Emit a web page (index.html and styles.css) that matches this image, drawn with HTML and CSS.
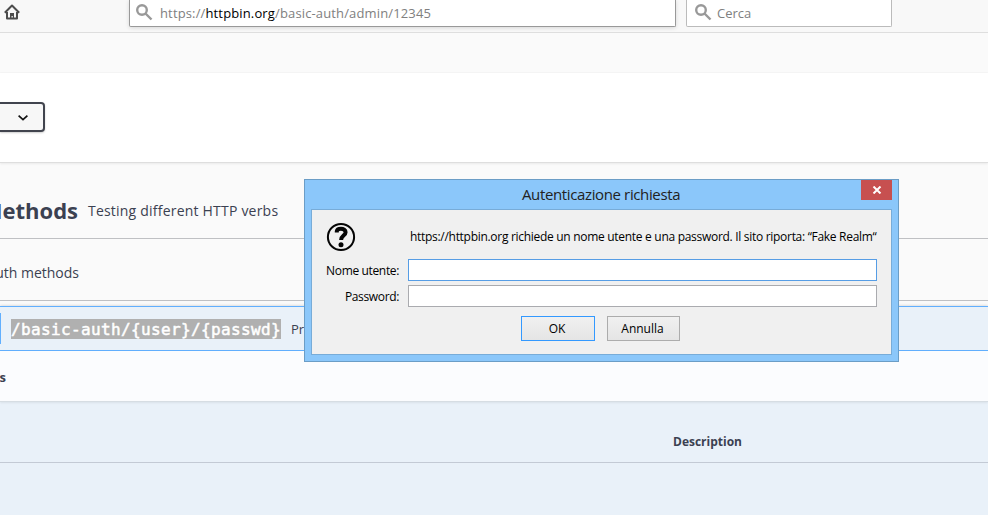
FILE: index.html
```html
<!DOCTYPE html>
<html lang="it">
<head>
<meta charset="utf-8">
<title>httpbin.org</title>
<link rel="stylesheet" href="styles.css">
</head>
<body>
<header class="toolbar">
  <svg class="home" width="16" height="16" viewBox="0 0 16 16" fill="none" stroke="#4c4c4c" stroke-width="2"><path d="M.8 8.700 8 1.500l7.200 7.200M3 8v6.500h10V8" stroke-linejoin="round"/><path d="M6 15V9h4v6H8.800v-3H7.500v3z" fill="#4c4c4c" stroke="none"/></svg>
  <div class="field address">
    <svg width="17" height="17" viewBox="0 0 17 17" fill="none" stroke="#999" stroke-width="2.400"><circle cx="6" cy="6" r="4.800"/><path d="m9.500 9.500 6 6"/></svg>
    <span class="url">https://<b>httpbin.org</b>/basic-auth/admin/12345</span>
  </div>
  <div class="field search">
    <svg width="17" height="17" viewBox="0 0 17 17" fill="none" stroke="#999" stroke-width="2.400"><circle cx="6" cy="6" r="4.800"/><path d="m9.500 9.500 6 6"/></svg>
    <span class="hint">Cerca</span>
  </div>
</header>
<main class="page">
  <section class="intro"></section>
  <section class="schemes">
    <div class="select"><svg width="10" height="6" viewBox="0 0 10 6" fill="none" stroke="#111" stroke-width="1.700"><path d="m.6.7 4.400 4 4.400-4"/></svg></div>
  </section>
  <section class="tag">
    <h2 class="clip methods"><span>Methods</span></h2>
    <span class="verbs">Testing different HTTP verbs</span>
  </section>
  <section class="tag auth"><div class="clip auth-name"><span>Auth methods</span></div></section>
  <section class="operation">
    <div class="summary">
      <i class="verb-edge"></i>
      <code class="path">/basic-auth/{user}/{passwd}</code>
      <span class="note">Prompts the user</span>
    </div>
    <div class="parameters"><div class="clip param-name"><span>s</span></div></div>
    <div class="table">
      <div class="table-head"><b class="desc">Description</b></div>
    </div>
  </section>
</main>
<div class="dialog">
  <div class="titlebar">
    <span class="title">Autenticazione richiesta</span>
    <div class="close"><svg width="10" height="8" viewBox="0 0 10 8" stroke="#fff" stroke-width="2"><path d="m1.500.5 7 7M8.500.5l-7 7"/></svg></div>
  </div>
  <div class="content">
    <div class="message-row">
      <svg class="question" width="30" height="30" viewBox="0 0 30 30" fill="none" stroke="#050505"><circle cx="15" cy="15" r="13.100" stroke-width="2"/><path d="M10.800 10.600V9.300C11 7.400 12.600 6.700 15 6.700s4.600 1.200 4.600 3.500c0 3.500-4.500 3.400-4.500 7.800" stroke-width="4"/><circle cx="15" cy="22.800" r="2.500" fill="#050505" stroke="none"/></svg>
      <span class="message">https://httpbin.org richiede un nome utente e una password. Il sito riporta: “Fake Realm“</span>
    </div>
    <div class="row"><span class="label user">Nome utente:</span><div class="input focus"></div></div>
    <div class="row"><span class="label pass">Password:</span><div class="input"></div></div>
    <div class="buttons"><div class="button primary"><span>OK</span></div><div class="button"><span class="cancel">Annulla</span></div></div>
  </div>
</div>
</body>
</html>
```
FILE: styles.css
```css
* { box-sizing: border-box; }
body { margin: 0; width: 988px; height: 515px; overflow: hidden; position: relative; font-family: "Open Sans", sans-serif; color: #3b4151; background: #fafafa; }
svg { display: block; flex: none; }
span, b, code { white-space: nowrap; }
.toolbar { height: 33px; display: flex; align-items: flex-start; background: #f8f8f8; border-bottom: 1px solid #dedede; }
.home { margin: 4px 0 0 4px; }
.field { height: 27px; display: flex; background: #fff; border: 1px solid #bbb; border-top: 0; border-radius: 0 0 2px 2px; }
.field svg { margin-top: 4px; }
.address { width: 547px; margin-left: 109px; padding-left: 6px; border-color: #999; box-shadow: 0 1px 4px #0002; }
.search { width: 206px; margin-left: 10px; padding-left: 8px; }
.url, .hint { font-size: 13px; line-height: 26px; color: #808080; }
.url { margin-left: 7px; letter-spacing: .14px; }
.url b { font-weight: 400; color: #000; }
.hint { margin-left: 5px; }
.intro { height: 40px; border-bottom: 1px solid #f5f5f5; }
.schemes { height: 90px; padding-top: 29px; background: #fff; border-bottom: 1px solid #dedede; box-shadow: 0 1px 2px #0001; }
.select { width: 45px; height: 30px; padding: 11px 0 0 18px; border: 2px solid #41444e; border-left: 0; border-radius: 0 4px 4px 0; background: #f7f7f7; box-shadow: 0 1px 2px #0003; }
.tag { height: 76px; display: flex; border-bottom: 1px solid #bfc0c3; }
.clip { display: flex; justify-content: flex-end; overflow: hidden; }
.methods { width: 78px; margin: 0; font-size: 22px; line-height: 95px; }
.verbs { margin-left: 10px; font-size: 14px; line-height: 96px; letter-spacing: .21px; }
.auth { height: 62px; }
.auth-name { width: 79px; font-size: 14px; line-height: 67px; }
.operation { padding-top: 5px; }
.summary { height: 45px; display: flex; align-items: center; background: #e9f1f9; border: solid #61affe; border-width: 1px 0; box-shadow: 0 0 3px #0003; }
.verb-edge { width: 1px; height: 31px; background: #61affe; }
.path { margin-left: 10px; height: 20px; width: 270px; font: 16px/21px "DejaVu Sans Mono", monospace; letter-spacing: .37px; background: #b0b0b0; color: #fff; -webkit-text-stroke: .5px #fff; }
.note { margin-left: 10px; font-size: 13px; }
.parameters { height: 51px; background: #fbfcfe; border-bottom: 1px solid #d6dde3; box-shadow: 0 1px 2px #0001; position: relative; }
.param-name { width: 6px; font-size: 13px; font-weight: 700; line-height: 52px; }
.table { height: 113px; background: #e9f1f9; }
.table-head { height: 61px; padding-left: 673px; border-bottom: 1px solid #c3cad5; }
.desc { font-size: 12px; line-height: 80px; }
.dialog { position: absolute; left: 304px; top: 179px; width: 595px; height: 183px; padding: 0 6px 6px; background: #8bc7fa; border: 1px solid #6b9dc6; color: #000; }
.titlebar { height: 29px; display: flex; }
.title { padding-left: 211px; flex: 1; font-size: 15px; line-height: 29px; letter-spacing: -.37px; color: #222; }
.close { width: 31px; height: 20px; display: flex; align-items: center; justify-content: center; background: #c75050; }
.content { height: 146px; padding: 12px 14px 0; background: #f0f0f0; border: 1px solid #78acd8; }
.message-row { height: 37px; display: flex; }
.message { margin-left: 54px; font-size: 12px; line-height: 30px; letter-spacing: -.295px; }
.row { height: 22px; margin-bottom: 4px; display: flex; align-items: center; }
.label { width: 73px; margin-right: 9px; display: flex; justify-content: flex-end; font-size: 12px; letter-spacing: -.35px; }
.input { flex: none; width: 469px; height: 22px; background: #fff; border: 1px solid #aaabaf; }
.focus { border-color: #569de5; }
.buttons { margin: 9px 0 0 195px; display: flex; gap: 12px; }
.button { width: 73px; height: 25px; padding-right: 2px; display: flex; align-items: center; justify-content: center; font-size: 12px; border: 1px solid #acacac; background: linear-gradient(#f0f0f0, #e5e5e5); }
.primary { width: 74px; border-color: #3399ff; }
```
